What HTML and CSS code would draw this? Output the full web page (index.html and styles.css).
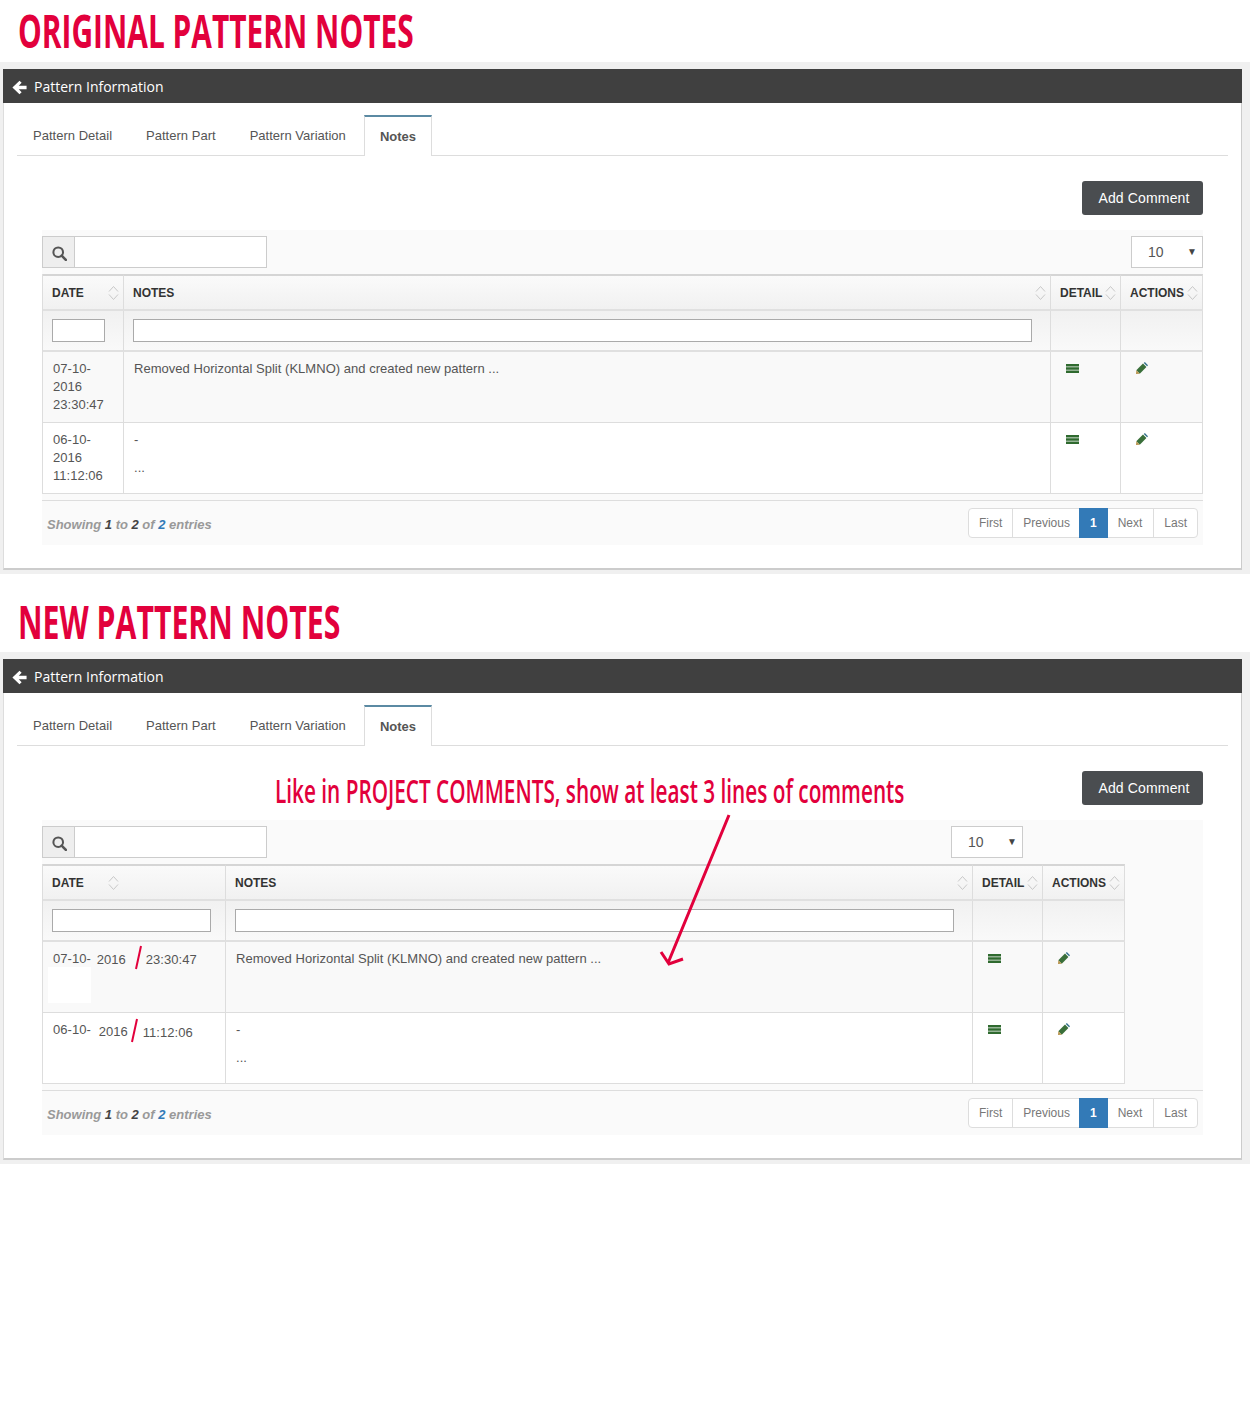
FILE: index.html
```html
<!DOCTYPE html>
<html lang="en">
<head>
<meta charset="utf-8">
<title>Pattern Notes</title>
<link rel="stylesheet" href="styles.css">
</head>
<body>
<svg class="sprites" width="0" height="0" aria-hidden="true">
  <defs>
    <symbol id="i-back" viewBox="0 0 14 14"><path d="M7 .6 .4 7 7 13.4l2-2L6.3 8.7H13.6V5.3H6.3L9 2.6z" fill="#fff"/></symbol>
    <symbol id="i-search" viewBox="0 0 14 14"><circle cx="5.8" cy="5.8" r="4.5" fill="none" stroke="#555" stroke-width="1.9"/><path d="m9 9 3.9 3.9" stroke="#555" stroke-width="2.4" stroke-linecap="round"/></symbol>
    <symbol id="i-sort" viewBox="0 0 11 16"><path d="M1 6.5 5.5 1.5l4.5 5M1 9.5l4.5 5 4.5-5" fill="none" stroke="#c8c8c8" stroke-width="1"/></symbol>
    <symbol id="i-list" viewBox="0 0 13 9"><path d="M0 0h13v2.4H0zM0 3.3h13v2.4H0zM0 6.6h13V9H0z" fill="#2f6a2f"/></symbol>
    <symbol id="i-edit" viewBox="0 0 12 12"><path d="M.3 8.2 7 1.6 10.4 5 3.8 11.7z" fill="#3a6f3a"/><path d="M7.8.9 8.8 0 12 3.2 11.1 4.2z" fill="#2f6d8a"/><path d="M0 12 .3 8.2 3.8 11.7z" fill="#b9954f"/></symbol>
  </defs>
</svg>

<h1 class="headline"><span class="headline-text">ORIGINAL PATTERN NOTES</span></h1>
<section class="frame">
  <div class="panel">
    <header class="panel-head"><svg class="back"><use href="#i-back"/></svg><span>Pattern Information</span></header>
    <nav class="tabs">
      <a class="tab">Pattern Detail</a><a class="tab">Pattern Part</a><a class="tab">Pattern Variation</a><a class="tab active">Notes</a>
    </nav>
    <div class="body">
      <div class="actions"><button class="add">Add Comment</button></div>
      <div class="dt">
        <div class="toolbar">
          <div class="search"><span class="addon"><svg class="search-icon"><use href="#i-search"/></svg></span><span class="search-input"></span></div>
          <div class="length"><span>10</span><span class="caret">▼</span></div>
        </div>
        <table class="grid">
          <colgroup><col class="c-date"><col><col class="c-detail"><col class="c-actions"></colgroup>
          <thead>
            <tr class="head">
              <th><div class="th-in th-date">DATE<svg class="sort"><use href="#i-sort"/></svg></div></th>
              <th><div class="th-in">NOTES<svg class="sort"><use href="#i-sort"/></svg></div></th>
              <th><div class="th-in">DETAIL<svg class="sort"><use href="#i-sort"/></svg></div></th>
              <th><div class="th-in">ACTIONS<svg class="sort"><use href="#i-sort"/></svg></div></th>
            </tr>
            <tr class="filter">
              <th><span class="filter-box"></span></th>
              <th><span class="filter-box"></span></th>
              <th></th>
              <th></th>
            </tr>
          </thead>
          <tbody>
            <tr class="odd">
              <td>07-10-<br>2016<br>23:30:47</td>
              <td>Removed Horizontal Split (KLMNO) and created new pattern ...</td>
              <td><svg class="ico-list"><use href="#i-list"/></svg></td>
              <td><svg class="ico-edit"><use href="#i-edit"/></svg></td>
            </tr>
            <tr>
              <td>06-10-<br>2016<br>11:12:06</td>
              <td><p class="note-line">-</p><p class="note-line">...</p></td>
              <td><svg class="ico-list"><use href="#i-list"/></svg></td>
              <td><svg class="ico-edit"><use href="#i-edit"/></svg></td>
            </tr>
          </tbody>
        </table>
        <footer class="dt-foot">
          <p class="info">Showing <b>1</b> to <b>2</b> of <b class="total">2</b> entries</p>
          <div class="pager"><a>First</a><a>Previous</a><a class="current">1</a><a>Next</a><a>Last</a></div>
        </footer>
      </div>
    </div>
  </div>
</section>

<h1 class="headline second"><span class="headline-text">NEW PATTERN NOTES</span></h1>
<section class="frame">
  <div class="panel proposal">
    <header class="panel-head"><svg class="back"><use href="#i-back"/></svg><span>Pattern Information</span></header>
    <nav class="tabs">
      <a class="tab">Pattern Detail</a><a class="tab">Pattern Part</a><a class="tab">Pattern Variation</a><a class="tab active">Notes</a>
    </nav>
    <div class="body">
      <div class="actions"><button class="add">Add Comment</button></div>
      <div class="dt">
        <div class="toolbar">
          <div class="search"><span class="addon"><svg class="search-icon"><use href="#i-search"/></svg></span><span class="search-input"></span></div>
          <div class="length"><span>10</span><span class="caret">▼</span></div>
        </div>
        <table class="grid">
          <colgroup><col class="c-date"><col><col class="c-detail"><col class="c-actions"></colgroup>
          <thead>
            <tr class="head">
              <th><div class="th-in th-date">DATE<svg class="sort"><use href="#i-sort"/></svg></div></th>
              <th><div class="th-in">NOTES<svg class="sort"><use href="#i-sort"/></svg></div></th>
              <th><div class="th-in">DETAIL<svg class="sort"><use href="#i-sort"/></svg></div></th>
              <th><div class="th-in">ACTIONS<svg class="sort"><use href="#i-sort"/></svg></div></th>
            </tr>
            <tr class="filter">
              <th><span class="filter-box"></span></th>
              <th><span class="filter-box"></span></th>
              <th></th>
              <th></th>
            </tr>
          </thead>
          <tbody>
            <tr class="odd">
              <td class="date-cell"><span class="d1">07-10-</span><span class="d2 a">2016</span><span class="d3 a">23:30:47</span>
                <span class="patch"></span><svg class="slash slash-a" viewBox="0 0 7 25"><path d="M6 1 1 24" stroke="#e2003c" stroke-width="2"/></svg></td>
              <td>Removed Horizontal Split (KLMNO) and created new pattern ...</td>
              <td><svg class="ico-list"><use href="#i-list"/></svg></td>
              <td><svg class="ico-edit"><use href="#i-edit"/></svg></td>
            </tr>
            <tr>
              <td class="date-cell"><span class="d1">06-10-</span><span class="d2 b">2016</span><span class="d3 b">11:12:06</span>
                <svg class="slash slash-b" viewBox="0 0 7 25"><path d="M6 1 1 24" stroke="#e2003c" stroke-width="2"/></svg></td>
              <td><p class="note-line">-</p><p class="note-line">...</p></td>
              <td><svg class="ico-list"><use href="#i-list"/></svg></td>
              <td><svg class="ico-edit"><use href="#i-edit"/></svg></td>
            </tr>
          </tbody>
        </table>
        <footer class="dt-foot">
          <p class="info">Showing <b>1</b> to <b>2</b> of <b class="total">2</b> entries</p>
          <div class="pager"><a>First</a><a>Previous</a><a class="current">1</a><a>Next</a><a>Last</a></div>
        </footer>
      </div>
    </div>
    <p class="callout">Like in PROJECT COMMENTS, show at least 3 lines of comments</p>
    <svg class="callout-arrow" viewBox="0 0 74 154"><path d="M70 1 9 149M2 138l8 12 14-5" fill="none" stroke="#e2003c" stroke-width="3"/></svg>
  </div>
</section>
</body>
</html>
```
FILE: styles.css
```css
* { box-sizing: border-box; }
html, body { margin: 0; padding: 0; background: #fff; }
body { font: 13px/18px "Liberation Sans", Arial, sans-serif; color: #555; min-height: 1417px; overflow-x: hidden; }
.sprites { position: absolute; }

.headline { margin: 0; height: 62px; padding: 1px 0 0 18px; font: 700 47px/58px "Open Sans", sans-serif; color: #e2003c; white-space: nowrap; }
.headline.second { height: 78px; padding-top: 18px; }
.headline-text { display: inline-block; transform: scaleX(.636); transform-origin: 0 50%; }
.second .headline-text { transform: scaleX(.643); }

.frame { background: #f0f0f0; padding: 7px 8px 5px 3px; height: 512px; }
.panel { position: relative; background: #fff; height: 501px; border-right: 1px solid #ccc; border-bottom: 2px solid #ccc; border-left: 1px solid #ddd; }
.panel-head { display: flex; align-items: center; height: 34px; margin: 0 -1px; background: #404040; color: #fff; font: 14px/34px "Open Sans", sans-serif; padding: 2px 0 0 9px; }
.back { width: 15px; height: 15px; margin-right: 7px; }

.tabs { display: flex; margin: 12px 13px 0 13px; height: 41px; border-bottom: 1px solid #ddd; letter-spacing: .02px; }
.tab { padding: 0 17px; line-height: 42px; color: #555; }
.tab:first-child { padding-left: 16px; }
.tab.active { height: 41px; margin-left: 1px; padding: 0 15px; font-weight: 700; line-height: 39px; color: #555; background: #fff; border: 1px solid #ddd; border-top: 2px solid #5b8aa3; border-bottom: 0; letter-spacing: 0; }

.body { padding: 25px 38px 0; }
.actions { display: flex; justify-content: flex-end; }
.add { width: 121px; height: 34px; border: 0; border-radius: 3px; background: #4a4d50; color: #fff; font: 14px/34px "Liberation Sans", Arial, sans-serif; letter-spacing: .15px; padding: 0 0 0 3px; }

.dt { margin-top: 15px; background: #fafafa; height: 315px; }
.toolbar { display: flex; justify-content: space-between; padding-top: 6px; height: 45px; }
.proposal .toolbar { width: 981px; }
.search { display: flex; height: 32px; }
.addon { display: flex; align-items: center; justify-content: center; width: 32px; padding: 2px 0 0 2px; background: #eee; border: 1px solid #ccc; border-right: 0; }
.search-icon { width: 15px; height: 15px; }
.search-input { width: 193px; background: #fff; border: 1px solid #ccc; }
.length { display: flex; justify-content: space-between; align-items: center; width: 72px; height: 32px; padding: 0 5px 0 16px; background: #fff; border: 1px solid #ccc; font-size: 14px; }
.caret { font-size: 10px; color: #444; }

.grid { width: 100%; margin-top: -1px; border-collapse: separate; border-spacing: 0; table-layout: fixed; border-left: 1px solid #ddd; }
.proposal .grid { width: 1083px; }
.c-date { width: 81px; }
.proposal .c-date { width: 183px; }
.c-detail { width: 70px; }
.c-actions { width: 82px; }

.grid th, .grid td { padding: 0; text-align: left; border-right: 1px solid #ddd; vertical-align: top; }
.head th { height: 37px; background: linear-gradient(#fafafa, #f1f1f1); border-top: 2px solid #d5d5d5; border-bottom: 2px solid #e0e0e0; color: #333; font-size: 12px; font-weight: 700; }
.th-in { display: flex; align-items: center; justify-content: space-between; height: 33px; padding: 0 4px 0 9px; }
.th-date { width: 80px; }
.sort { width: 11px; height: 16px; flex: none; }
.filter th { height: 41px; background: linear-gradient(#f1f1f1, #f9f9f9); border-bottom: 2px solid #e0e0e0; padding: 8px 18px 0 9px; }
.filter-box { display: block; height: 23px; background: #fff; border: 1px solid #aaa; }
.proposal .filter th:first-child { padding-right: 14px; }
.grid td { height: 71px; padding: 8px 10px; border-bottom: 1px solid #ddd; background: #fff; color: #555; letter-spacing: .03px; }
.grid .odd td { background: #f9f9f9; }
.note-line { margin: 0 0 10px; }
.note-line:last-child { margin-bottom: 0; }

.ico-list { display: block; width: 13px; height: 9px; margin: 4px 0 0 5px; }
.ico-edit { display: block; width: 12px; height: 12px; margin: 2px 0 0 5px; }

.date-cell { position: relative; white-space: nowrap; }
.d1, .d2, .d3 { position: relative; display: inline-block; }
.d2.a { margin-left: 6px; top: 1px; }
.d3.a { margin-left: 20px; top: 1px; }
.d2.b { margin-left: 8px; top: 2px; }
.d3.b { margin-left: 15px; top: 3px; }
.patch { position: absolute; left: 5px; top: 25px; width: 43px; height: 36px; background: #fff; }
.slash { position: absolute; width: 7px; height: 25px; }
.slash-a { left: 92px; top: 3px; }
.slash-b { left: 88px; top: 5px; }

.dt-foot { display: flex; justify-content: space-between; height: 45px; margin-top: 6px; padding: 7px 5px 0 5px; border-top: 1px solid #ddd; }
.info { margin: 8px 0 0; font-style: italic; font-weight: 700; color: #999; }
.info b { color: #444; }
.info .total { color: #337ab7; }
.pager { display: flex; height: 30px; background: #fff; border: 1px solid #ddd; border-radius: 4px; font-size: 12px; line-height: 28px; color: #777; }
.pager a { padding: 0 10px; border-left: 1px solid #ddd; }
.pager a:first-child { border-left: 0; }
.pager .current { margin: -1px 0 -1px -1px; padding: 0 11px; line-height: 30px; background: #337ab7; color: #fff; font-weight: 700; border-left: 0; }
.pager .current + a { border-left: 0; padding-right: 11px; }

.callout { position: absolute; left: 271px; top: 108px; margin: 0; font: 600 33px/48px "Open Sans", sans-serif; color: #e2003c; white-space: nowrap; transform: scaleX(.629); transform-origin: 0 50%; }
.callout-arrow { position: absolute; left: 655px; top: 155px; width: 74px; height: 154px; }
```
